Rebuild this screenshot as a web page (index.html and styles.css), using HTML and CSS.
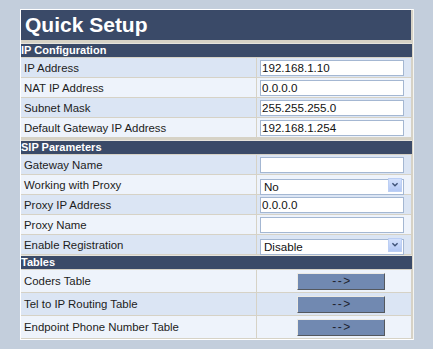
FILE: index.html
```html
<!DOCTYPE html>
<html lang="en">
<head>
    <meta charset="UTF-8">
    <title>Quick Setup</title>
    <link rel="stylesheet" href="styles.css">
</head>
<body>
    <div class="panel">
        <div class="title">Quick Setup</div>

        <!-- IP Configuration -->
        <div class="section">
            <div class="section-head">IP Configuration</div>
            <div class="row dark">
                <div class="label">IP Address</div>
                <div class="value"><input class="field" type="text" value="192.168.1.10"></div>
            </div>
            <div class="row">
                <div class="label">NAT IP Address</div>
                <div class="value"><input class="field" type="text" value="0.0.0.0"></div>
            </div>
            <div class="row dark">
                <div class="label">Subnet Mask</div>
                <div class="value"><input class="field" type="text" value="255.255.255.0"></div>
            </div>
            <div class="row">
                <div class="label">Default Gateway IP Address</div>
                <div class="value"><input class="field" type="text" value="192.168.1.254"></div>
            </div>
        </div>

        <!-- SIP Parameters -->
        <div class="section">
            <div class="section-head">SIP Parameters</div>
            <div class="row dark">
                <div class="label">Gateway Name</div>
                <div class="value"><input class="field" type="text" value=""></div>
            </div>
            <div class="row">
                <div class="label">Working with Proxy</div>
                <div class="value">
                    <div class="select-wrap">
                        <select class="field">
                            <option>No</option>
                            <option>Yes</option>
                        </select>
                        <span class="arrow">
                            <svg width="14" height="13" viewBox="0 0 14 13"><polyline points="4,5 7,8 10,5" fill="none" stroke="#3f5378" stroke-width="1.6"/></svg>
                        </span>
                    </div>
                </div>
            </div>
            <div class="row dark">
                <div class="label">Proxy IP Address</div>
                <div class="value"><input class="field" type="text" value="0.0.0.0"></div>
            </div>
            <div class="row">
                <div class="label">Proxy Name</div>
                <div class="value"><input class="field" type="text" value=""></div>
            </div>
            <div class="row dark">
                <div class="label">Enable Registration</div>
                <div class="value">
                    <div class="select-wrap">
                        <select class="field">
                            <option>Disable</option>
                            <option>Enable</option>
                        </select>
                        <span class="arrow">
                            <svg width="14" height="13" viewBox="0 0 14 13"><polyline points="4,5 7,8 10,5" fill="none" stroke="#3f5378" stroke-width="1.6"/></svg>
                        </span>
                    </div>
                </div>
            </div>
        </div>

        <!-- Tables -->
        <div class="section tables">
            <div class="section-head">Tables</div>
            <div class="row">
                <div class="label">Coders Table</div>
                <div class="value"><button class="go">--&gt;</button></div>
            </div>
            <div class="row dark">
                <div class="label">Tel to IP Routing Table</div>
                <div class="value"><button class="go">--&gt;</button></div>
            </div>
            <div class="row">
                <div class="label">Endpoint Phone Number Table</div>
                <div class="value"><button class="go">--&gt;</button></div>
            </div>
        </div>
    </div>
</body>
</html>
```

FILE: styles.css
```css
body {
    margin: 0;
    background-color: #c3cedc;
    font-family: 'Liberation Sans', Arial, sans-serif;
    color: #1c1c1c;
}
.panel {
    width: 391px;
    margin: 9px 0 0 20px;
    border: 1px solid #fff;
    border-right-color: #f4f4f0;
    background-color: #d6d2c6;
    padding: 0 1px 1px 0;
    box-sizing: content-box;
}
.title {
    height: 30px;
    line-height: 30px;
    background-color: #3a4a68;
    color: #fff;
    font-size: 21px;
    font-weight: bold;
    padding-left: 4px;
    width: 386px;
}
/* sections */
.section {
    display: flex;
    flex-direction: column;
    gap: 1px;
    margin-top: 3px;
}
.section.tables {
    margin-top: 1px;
}
.section-head {
    height: 13px;
    line-height: 13px;
    background-color: #3a4a68;
    color: #fff;
    font-size: 11px;
    font-weight: bold;
    padding-left: 0;
    border-top: 1px solid #e6e4dc;
}
.row {
    display: grid;
    grid-template-columns: 235px 154px;
    gap: 1px;
    height: 19px;
}
.tables .row {
    height: 22px;
}
.row > div {
    background-color: #eef3fb;
    display: flex;
    align-items: center;
}
.row.dark > div {
    background-color: #dbe5f4;
}
.label {
    padding-left: 3px;
    font-size: 11.4px;
}
/* inputs */
.field {
    width: 144px;
    height: 16px;
    box-sizing: border-box;
    margin: 0 0 0 3px;
    padding: 0 1px;
    border: 1px solid #a4b7d2;
    background-color: #fff;
    font-family: 'Liberation Sans', Arial, sans-serif;
    font-size: 11.6px;
    line-height: 14px;
    color: #111;
    outline: none;
}
.select-wrap {
    position: relative;
    height: 16px;
}
select.field {
    appearance: none;
    -webkit-appearance: none;
    border-radius: 0;
    padding: 0 0 1px 3px;
}
.arrow {
    position: absolute;
    right: 2px;
    top: 1px;
    width: 14px;
    height: 14px;
    box-sizing: border-box;
    border: 1px solid #bccff4;
    background: linear-gradient(#d4e1fc, #b3c8f4);
    display: flex;
    align-items: center;
    justify-content: center;
    pointer-events: none;
}
/* table buttons */
.go {
    width: 88px;
    height: 17px;
    margin-left: 40px;
    padding: 0 0 0 2px;
    background-color: #7189b1;
    border: 1px solid;
    border-color: #eceae4 #54585e #54585e #eceae4;
    font-family: 'Liberation Sans', Arial, sans-serif;
    font-size: 12px;
    letter-spacing: 1.5px;
    color: #1e2430;
    line-height: 14px;
    cursor: pointer;
}
```
